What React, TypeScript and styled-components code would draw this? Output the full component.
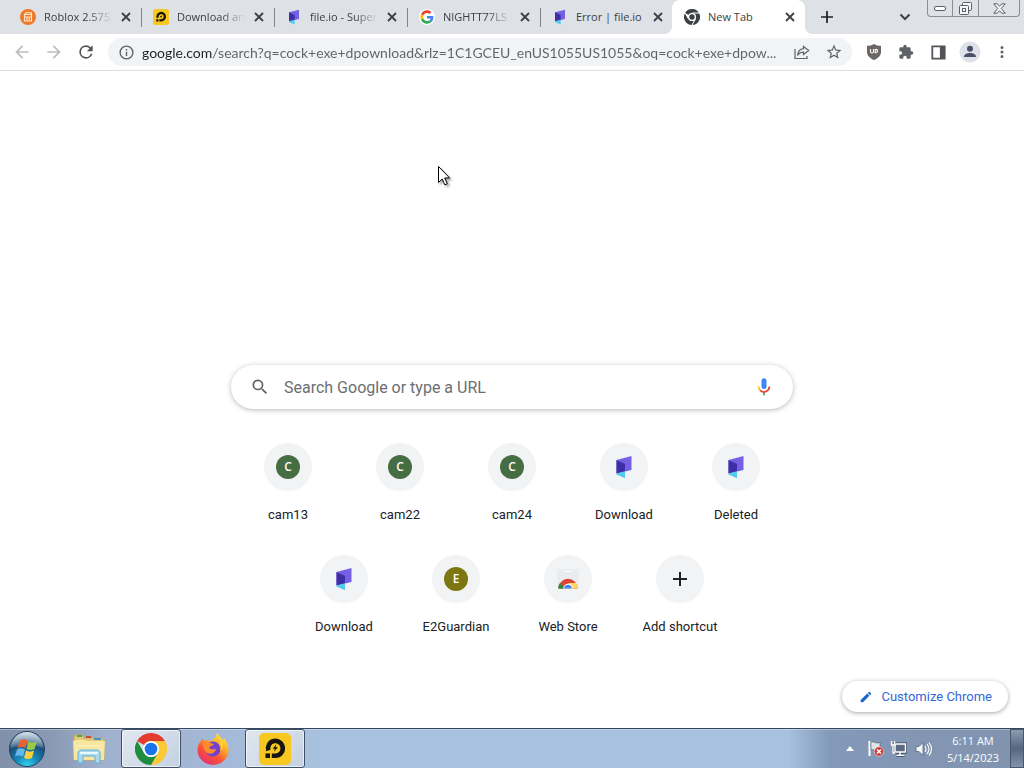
import React from "react";
import styled, { createGlobalStyle, css } from "styled-components";

const GlobalStyle = createGlobalStyle`
  *, *::before, *::after { box-sizing: border-box; }
  body { margin: 0; background: #fff; }
  button, input { font: inherit; color: inherit; border: 0; padding: 0; margin: 0; background: none; outline: none; }
  a { color: inherit; text-decoration: none; }
  svg { display: block; flex: none; }
`;

const ui = `"Open Sans", "Noto Sans", sans-serif`;
const web = `Roboto, sans-serif`;

const Screen = styled.div`
  display: flex;
  flex-direction: column;
  min-height: 100vh;
  font-family: ${ui};
  color: #3c4043;
`;

/* Tab strip */
const TabStrip = styled.header`
  display: flex;
  height: 34px;
  padding-left: 8px;
  background: #dee1e6;
`;

const TabList = styled.nav`
  display: flex;
  min-width: 0;
`;

const TabItem = styled.div<{ $active?: boolean; $divider?: boolean }>`
  position: relative;
  display: flex;
  align-items: center;
  gap: 8px;
  width: 133px;
  padding: 0 9px 0 12px;
  font-size: 11px;
  line-height: 16px;
  ${(p) =>
    p.$divider &&
    css`
      &::before {
        content: "";
        position: absolute;
        left: 0;
        top: 8px;
        width: 1px;
        height: 19px;
        background: #808488;
      }
    `}
  ${(p) =>
    p.$active &&
    css`
      margin-left: -1px;
      background: #fff;
      border-radius: 8px 8px 0 0;
      &::before, &::after {
        content: "";
        position: absolute;
        bottom: 0;
        width: 8px;
        height: 8px;
      }
      &::before {
        left: -8px;
        background: radial-gradient(circle at 0 0, transparent 8px, #fff 8px);
      }
      &::after {
        right: -8px;
        background: radial-gradient(circle at 100% 0, transparent 8px, #fff 8px);
      }
    `}
`;

const TabTitle = styled.a<{ $fade?: boolean }>`
  flex: 1;
  min-width: 0;
  overflow: hidden;
  white-space: nowrap;
  mask-image: ${(p) => (p.$fade ? "linear-gradient(to right, #000 65%, transparent 100%)" : "none")};
`;

const IconButton = styled.button<{ $size: number }>`
  display: flex;
  flex: none;
  align-items: center;
  justify-content: center;
  width: ${(p) => p.$size}px;
  height: ${(p) => p.$size}px;
`;

const StripTools = styled.div`
  display: flex;
  flex: 1;
  align-items: center;
  justify-content: space-between;
  padding: 0 12px 0 8px;
`;

const WindowButtons = styled.div`
  display: flex;
  height: 17px;
  margin-right: 4px;
  border: 1px solid #8b8e94;
  border-top: 0;
  border-radius: 0 0 4px 4px;
`;

const WindowButton = styled.button<{ $width: number }>`
  display: flex;
  align-items: center;
  justify-content: center;
  width: ${(p) => p.$width}px;
  & + & { border-left: 1px solid #8b8e94; }
`;

/* Toolbar */
const Toolbar = styled.div`
  display: flex;
  align-items: center;
  height: 37px;
  padding: 0 6px;
  border-bottom: 1px solid #dcdde0;
  background: #fff;
`;

const AddressBar = styled.form`
  display: flex;
  flex: 1;
  align-items: center;
  min-width: 0;
  height: 28px;
  margin: 0 6px;
  padding: 0 2px;
  border-radius: 14px;
  background: #f1f3f4;
`;

const AddressInput = styled.input`
  flex: 1;
  min-width: 0;
  height: 24px;
  font-family: Lato, ${ui};
  font-size: 14px;
  color: #5f6368;
  background: linear-gradient(to right, #202124 71px, #5f6368 71px);
  background-clip: text;
  -webkit-background-clip: text;
  -webkit-text-fill-color: transparent;
`;

/* New tab page */
const Page = styled.main`
  display: flex;
  flex: 1;
  flex-direction: column;
  align-items: center;
  padding: 294px 16px 16px;
  font-family: ${web};
  background: #fff;
`;

const SearchBox = styled.form`
  display: flex;
  align-items: center;
  gap: 14px;
  width: 100%;
  max-width: 562px;
  height: 44px;
  padding: 0 19px;
  border-radius: 22px;
  box-shadow: 0 1px 5px rgba(32, 33, 36, 0.32);
`;

const SearchInput = styled.input`
  flex: 1;
  min-width: 0;
  height: 24px;
  font-size: 16px;
  &::placeholder { color: #6b6f73; opacity: 1; }
`;

const Shortcuts = styled.nav`
  display: flex;
  flex-wrap: wrap;
  justify-content: center;
  width: 100%;
  max-width: 560px;
  margin-top: 18px;
`;

const tileStyle = css`
  display: flex;
  flex-direction: column;
  align-items: center;
  gap: 16px;
  width: 112px;
  height: 112px;
  padding-top: 16px;
  font-size: 13px;
  line-height: 16px;
  color: #202124;
`;

const Tile = styled.a`${tileStyle}`;
const AddTile = styled.button`${tileStyle}`;

const TileIcon = styled.span`
  display: flex;
  align-items: center;
  justify-content: center;
  width: 48px;
  height: 48px;
  border-radius: 50%;
  background: #f1f3f4;
`;

const Monogram = styled.span<{ $color: string }>`
  width: 24px;
  height: 24px;
  border-radius: 50%;
  background: ${(p) => p.$color};
  color: #fff;
  font: 600 12px/24px "Open Sans", sans-serif;
  text-align: center;
`;

const CustomizeButton = styled.button`
  display: flex;
  align-items: center;
  align-self: flex-end;
  gap: 8px;
  height: 31px;
  margin-top: auto;
  padding: 0 16px 0 17px;
  border-radius: 16px;
  font-size: 13px;
  color: #3367d6;
  background: #fff;
  box-shadow: 0 1px 4px rgba(32, 33, 36, 0.4);
`;

/* Taskbar */
const Taskbar = styled.footer`
  display: flex;
  height: 40px;
  border-top: 1px solid #34495f;
  color: #fff;
  background: linear-gradient(to right, #8090a8 0, #8b9bb6 55px, #9fb1cd 105px, #a3b8d6 210px, #a7c1de 320px, #a7c1de 77%, #8399b8 81%, #8193ae 100%);
  box-shadow: inset 0 1px 0 rgba(255, 255, 255, 0.35);
`;

const TaskButtons = styled.div`
  display: flex;
  flex: 1;
`;

const TaskButton = styled.button<{ $open?: boolean }>`
  display: flex;
  align-items: center;
  justify-content: center;
  width: 60px;
  height: 39px;
  margin: 0 1px;
  border-radius: 3px;
  ${(p) =>
    p.$open &&
    css`
      border: 1px solid #3f4f66;
      background: linear-gradient(135deg, #e0e7f0, #c5d1e1);
      box-shadow: inset 0 0 0 1px rgba(255, 255, 255, 0.6);
    `}
`;

const StartButton = styled.button`
  display: flex;
  align-items: center;
  width: 58px;
  padding-left: 8px;
`;

const Tray = styled.div`
  display: flex;
  align-items: center;
  gap: 6px;
`;

const Clock = styled.time`
  width: 62px;
  margin-left: 4px;
  font-size: 11px;
  line-height: 17px;
  text-align: center;
  white-space: nowrap;
`;

const ShowDesktop = styled.button`
  width: 14px;
  height: 39px;
  border: 1px solid #46566d;
  background: linear-gradient(to bottom, #8d9bb0, #56667d 50%, #8393aa);
`;

const Pointer = styled.svg`
  position: absolute;
  left: 437px;
  top: 165px;
  filter: drop-shadow(2px 2px 1px rgba(0, 0, 0, 0.35));
`;

/* Drawings */
const RobloxGuideIcon = () => (
  <svg width="16" height="16" viewBox="0 0 16 16">
    <circle cx="8" cy="8" r="8" fill="#ee7a28" />
    <path d="M4.500 5.500h7v6.500h-7zM4.500 5.500 6 3.800h5.500v1.700M4.500 8h7M7 8v3.500M9.300 8v3.500" fill="none" stroke="#ffe7d2" strokeWidth="1.100" />
  </svg>
);

const LdIcon = ({ size }: { size: number }) => (
  <svg width={size} height={size} viewBox="0 0 32 32">
    <rect width="32" height="32" rx="5" fill="#f8c820" />
    <path d="M9.300 17.500A7.400 7.400 0 1 1 16.500 22.700h-3.700" fill="none" stroke="#17150c" strokeWidth="4.600" />
    <path d="M6.500 20.400h4.500V25H6.500z" fill="#17150c" />
    <path d="m17.300 11.300-3.600 4.500h2.200l-.8 2.900 3.800-4.400h-2.300z" fill="#17150c" />
  </svg>
);

const FileIoIcon = ({ size }: { size: number }) => (
  <svg width={size} height={size} viewBox="0 0 24 24">
    <path d="M4.500 5 19.500 1v14L4.500 18.500z" fill="#7560e4" />
    <path d="m4.500 5 8.500 4v7.500l-8.500 2z" fill="#3f2fa6" />
    <path d="m4.500 18.500 8.500-2.300v7L4.500 19.500z" fill="#55c9ea" />
  </svg>
);

const GoogleIcon = () => (
  <svg width="16" height="16" viewBox="0 0 48 48">
    <circle cx="24" cy="24" r="24" fill="#fff" />
    <g transform="translate(4 4) scale(.833)">
      <path fill="#EA4335" d="M24 9.500c3.540 0 6.710 1.220 9.210 3.600l6.850-6.850C35.900 2.380 30.470 0 24 0 14.620 0 6.510 5.380 2.560 13.220l7.980 6.190C12.430 13.720 17.740 9.500 24 9.500z" />
      <path fill="#4285F4" d="M46.980 24.550c0-1.570-.15-3.090-.38-4.550H24v9.020h12.940c-.58 2.960-2.260 5.480-4.780 7.180l7.730 6c4.510-4.180 7.090-10.360 7.090-17.650z" />
      <path fill="#FBBC05" d="M10.530 28.590c-.48-1.450-.76-2.990-.76-4.590s.27-3.140.76-4.590l-7.980-6.190C.92 16.460 0 20.120 0 24s.92 7.540 2.560 10.780l7.970-6.190z" />
      <path fill="#34A853" d="M24 48c6.480 0 11.930-2.130 15.890-5.810l-7.730-6c-2.150 1.450-4.920 2.300-8.160 2.300-6.260 0-11.570-4.220-13.470-9.910l-7.980 6.190C6.510 42.620 14.620 48 24 48z" />
    </g>
  </svg>
);

const ChromeIcon = ({ size, mono }: { size: number; mono?: boolean }) => (
  <svg width={size} height={size} viewBox="0 0 48 48">
    <path d="M24 24 3.200 12A24 24 0 0 1 44.800 12z" fill={mono ? "#3c4043" : "#e33b2e"} />
    <path d="M24 12h20.800A24 24 0 0 1 24 48l10.400-18z" fill={mono ? "#3c4043" : "#fcc934"} />
    <path d="M3.200 12 13.600 30a12 12 0 0 0 20.800 0L24 48A24 24 0 0 1 3.200 12z" fill={mono ? "#3c4043" : "#1e8e3e"} />
    {mono && <path d="M24 12h21M13.600 30 3.200 12M34.400 30 24 48" stroke="#fff" strokeWidth="3" />}
    <circle cx="24" cy="24" r="12" fill="#fff" />
    <circle cx="24" cy="24" r={mono ? 8 : 9.5} fill={mono ? "#3c4043" : "#1a73e8"} />
  </svg>
);

const CrossIcon = () => (
  <svg width="10" height="10" viewBox="0 0 10 10"><path d="m1 1 8 8M9 1 1 9" stroke="#3c4043" strokeWidth="1.800" /></svg>
);

const PlusIcon = ({ size }: { size: number }) => (
  <svg width={size} height={size} viewBox="0 0 14 14"><path d="M7 0v14M0 7h14" stroke="#202124" strokeWidth="2" /></svg>
);

const WebStoreIcon = () => (
  <svg width="24" height="24" viewBox="0 0 24 24">
    <path d="M1 2h22v4l-1 16H2L1 6z" fill="#e9ebee" />
    <path d="M8 4h8v1H8z" fill="#fff" />
    <path d="M2.300 21.500a9.700 9.700 0 0 1 19.400 0z" fill="#db4437" />
    <path d="M2.300 21.500a9.700 9.700 0 0 1 1.700-5.400l4.500 5.400z" fill="#1e8e3e" />
    <path d="M12 16h8.100a9.700 9.700 0 0 1 1.600 5.500H14z" fill="#fdd663" />
    <path d="M7.300 21.500a4.700 4.700 0 0 1 9.400 0z" fill="#fff" />
    <path d="M8.300 21.500a3.700 3.700 0 0 1 7.400 0z" fill="#4285f4" />
  </svg>
);

const MicIcon = () => (
  <svg width="20" height="20" viewBox="0 0 24 24">
    <rect x="9" y="1.500" width="6" height="13" rx="3" fill="#4285f4" />
    <path d="M11 17.500h2V22h-2z" fill="#34a853" />
    <path d="M5.500 11.500a6.500 6.500 0 0 0 2 4.600" fill="none" stroke="#fbbc04" strokeWidth="2" />
    <path d="M7.400 16a6.500 6.500 0 0 0 11.100-4.500" fill="none" stroke="#ea4335" strokeWidth="2" />
  </svg>
);

const glyphs = {
  back: "M20 11H7.830l5.590-5.590L12 4l-8 8 8 8 1.410-1.410L7.830 13H20v-2z",
  forward: "m12 4-1.410 1.410L16.170 11H4v2h12.170l-5.580 5.590L12 20l8-8z",
  reload: "M17.650 6.350A7.960 7.960 0 0 0 12 4a8 8 0 1 0 7.730 10h-2.080A6 6 0 1 1 12 6c1.660 0 3.140.69 4.220 1.780L13 11h7V4z",
  info: "M11 7h2v2h-2zm0 4h2v6h-2zm1-9a10 10 0 1 0 0 20 10 10 0 0 0 0-20zm0 18a8 8 0 1 1 0-16 8 8 0 0 1 0 16z",
  star: "m22 9.240-7.190-.62L12 2 9.190 8.630 2 9.240l5.460 4.730L5.820 21 12 17.270 18.180 21l-1.630-7.030zM12 15.400l-3.760 2.270 1-4.280-3.320-2.880 4.380-.38L12 6.100l1.710 4.040 4.380.38-3.320 2.880 1 4.280z",
  puzzle: "M20.500 11H19V7a2 2 0 0 0-2-2h-4V3.500a2.500 2.500 0 0 0-5 0V5H4a2 2 0 0 0-2 2v3.800h1.500a2.700 2.700 0 0 1 0 5.400H2V20c0 1.100.9 2 2 2h3.800v-1.500a2.700 2.700 0 0 1 5.400 0V22H17a2 2 0 0 0 2-2v-4h1.500a2.500 2.500 0 0 0 0-5z",
  more: "M12 8a2 2 0 1 0 0-4 2 2 0 0 0 0 4zm0 2a2 2 0 1 0 0 4 2 2 0 0 0 0-4zm0 6a2 2 0 1 0 0 4 2 2 0 0 0 0-4z",
  panel: "M2 2h20v20H2zm2.500 2.500v15h9.500v-15z",
  search: "M15.500 14h-.79l-.28-.27A6.500 6.500 0 1 0 13.730 14.430l.27.28v.79l5 4.990L20.490 19zm-6 0a4.500 4.500 0 1 1 0-9 4.500 4.500 0 0 1 0 9z",
  pencil: "M3 17.250V21h3.750L17.810 9.940l-3.750-3.750zM20.710 7.040a1 1 0 0 0 0-1.410l-2.340-2.340a1 1 0 0 0-1.410 0l-1.830 1.830 3.750 3.750z",
};

const Glyph = ({ name, size, color = "#5f6368" }: { name: keyof typeof glyphs; size: number; color?: string }) => (
  <svg width={size} height={size} viewBox="0 0 24 24"><path d={glyphs[name]} fill={color} fillRule="evenodd" /></svg>
);

const ShareIcon = () => (
  <svg width="16" height="16" viewBox="0 0 16 16" fill="none" stroke="#5f6368" strokeWidth="1.200">
    <path d="M1 5v9.500h12V12M9.500 2.500 14.700 6.500l-5.200 4V8.200C6.500 8.200 4.800 9.500 3.500 11.500 4 7.500 6 5 9.500 4.700z" />
  </svg>
);

const ShieldIcon = () => (
  <svg width="16" height="16" viewBox="0 0 16 16">
    <path d="M8 0c2 1.400 4.500 1.800 7 1.800V8c0 4-3.500 6.500-7 8-3.500-1.500-7-4-7-8V1.800C3.500 1.800 6 1.400 8 0z" fill="#6c6764" />
    <path d="M4.500 5v2.500a1.500 1.500 0 0 0 3 0V5M9.200 5.600v3h.8a1.600 1.600 0 0 0 0-3.200z" fill="none" stroke="#fff" strokeWidth="1.100" />
  </svg>
);

const AvatarIcon = () => (
  <svg width="22" height="22" viewBox="0 0 22 22">
    <circle cx="11" cy="11" r="10.500" fill="#dfe1ea" />
    <circle cx="11" cy="7.800" r="3" fill="#4b5066" />
    <path d="M5 16c0-3 3-4 6-4s6 1 6 4z" fill="#4b5066" />
  </svg>
);

const StartOrb = () => (
  <svg width="38" height="38" viewBox="0 0 38 38">
    <defs>
      <radialGradient id="orb" cx=".5" cy="1" r=".95">
        <stop offset="0" stopColor="#35d9f5" /><stop offset=".35" stopColor="#1689b9" />
        <stop offset=".7" stopColor="#1b4f7b" /><stop offset="1" stopColor="#7f9cb5" />
      </radialGradient>
      <linearGradient id="orbShine" x2="0" y2="1">
        <stop offset="0" stopColor="#fff" stopOpacity=".65" /><stop offset="1" stopColor="#fff" stopOpacity=".12" />
      </linearGradient>
    </defs>
    <circle cx="19" cy="19" r="17.500" fill="url(#orb)" stroke="#24435e" />
    <path d="M3 18a16 16 0 0 1 32 0c-10-4-22-3-32 0z" fill="url(#orbShine)" />
    <path d="M12 10.500c3-2 5-1.500 7.500 0l-2 7.500c-3-1.500-5-1.500-8 0z" fill="#ea6232" />
    <path d="M20.500 11.500c3 1.500 5 1.500 8.500 0l-2.500 7.500c-3 1.500-5 1-8 0z" fill="#9bc943" />
    <path d="M9 19.500c3-2 5-1.500 8 0l-2 7c-3-1.500-5-1.500-8 0z" fill="#65b7ec" />
    <path d="M18 20.500c3 1.500 5 1.500 8 0l-2 7.500c-3 1.500-5 1-8 0z" fill="#fbcf42" />
  </svg>
);

const ExplorerIcon = () => (
  <svg width="34" height="32" viewBox="0 0 34 32">
    <path d="M2 4 3 2h8l1 3h18l2 2v20H2z" fill="#e4c878" stroke="#c9a95c" />
    <path d="M5 2h5v2H5z" fill="#49a942" /><path d="M14 3h5v2h-5z" fill="#bd5537" /><path d="M22 5h7v2h-7z" fill="#4792ce" />
    <path d="M1 8c5-2 10-1 15 0h17l-1 19H2z" fill="#f7e6a0" />
    <path d="M3 13h28M3 17h28" stroke="#fff4c4" />
    <path d="M6 30V20c0-2 1-3 3-3h16c2 0 3 1 3 3v10h-5v-7H11v7z" fill="#a9d9ef" stroke="#62aed4" />
    <path d="M8 20h18" stroke="#e9faff" strokeWidth="2" />
  </svg>
);

const FirefoxIcon = () => (
  <svg width="32" height="32" viewBox="0 0 32 32">
    <defs>
      <linearGradient id="fox" x1=".85" y1="0" x2=".2" y2="1">
        <stop offset="0" stopColor="#fff04a" /><stop offset=".35" stopColor="#ffac28" />
        <stop offset=".65" stopColor="#fb5134" /><stop offset="1" stopColor="#e12c83" />
      </linearGradient>
    </defs>
    <path d="M19 4c0-2 .5-3 1.500-4 1 3 4 4.500 5.500 7l1-2c3 4 4.500 8 4.500 12A15.500 15 0 0 1 .5 17c0-4 1.500-7 3.500-9V5l4 3c3-1 4.500-.5 6 0z" fill="url(#fox)" />
    <circle cx="16" cy="16" r="7.500" fill="#7341ca" />
    <path d="M8 8c2-1 4 0 5 2l4 1c-1 2-4 1.500-5 4 2 2 5 1 7 1-1 5-7 6-10 3-4-4-3-8-1-11z" fill="#ff8b2b" />
    <path d="M19 4c5 4 6 9 4 14 4-3 3-8 1-11z" fill="#ffd43b" />
  </svg>
);

const FlagIcon = () => (
  <svg width="17" height="17" viewBox="0 0 17 17">
    <path d="M2.500 1v15" stroke="#fff" strokeWidth="2" />
    <path d="M4 2c3-1 4 2 9 .5V10c-4 1.500-6-1-9 0z" fill="#dfe4eb" stroke="#4a5668" strokeWidth=".6" />
    <circle cx="12" cy="11.500" r="4.700" fill="#d13a32" stroke="#fff" strokeWidth=".5" />
    <path d="m10 9.500 4 4m0-4-4 4" stroke="#fff" strokeWidth="1.600" />
  </svg>
);

const NetworkIcon = () => (
  <svg width="18" height="17" viewBox="0 0 18 17" fill="none">
    <path d="M5 4h10.500v8H5zM10 12v3M6.500 15.300h8" stroke="#35445a" strokeWidth="3" />
    <path d="M5 4h10.500v8H5z" fill="#5a6a82" />
    <path d="M5 4h10.500v8H5zM10 12v3M6.500 15.300h8" stroke="#fff" strokeWidth="1.500" />
    <path d="M1.500 1v4h3V1M3 5v8h2" stroke="#fff" strokeWidth="1.300" />
  </svg>
);

const SpeakerIcon = () => (
  <svg width="17" height="16" viewBox="0 0 17 16" fill="none">
    <path d="M1 5.500h3L8 1.500v13l-4-4H1z" fill="#f4f6f8" stroke="#4a586c" strokeWidth=".7" />
    <path d="M10 5c1.300 2 1.300 4 0 6M12 3c2.300 3 2.300 7 0 10M14 1.500c3 4 3 9 0 13" stroke="#fff" strokeWidth="1.100" />
  </svg>
);

type TabInfo = { title: string; icon: React.ReactNode; divider?: boolean; fade?: boolean };

const tabs: TabInfo[] = [
  { title: "Roblox 2.575", icon: <RobloxGuideIcon />, fade: true },
  { title: "Download an", icon: <LdIcon size={16} />, divider: true, fade: true },
  { title: "file.io - Super", icon: <FileIoIcon size={16} />, divider: true, fade: true },
  { title: "NIGHTT77LS", icon: <GoogleIcon />, divider: true, fade: true },
  { title: "Error | file.io", icon: <FileIoIcon size={16} />, divider: true },
  { title: "New Tab", icon: <ChromeIcon size={16} mono /> },
];

const shortcuts = [
  { label: "cam13", icon: <Monogram $color="#476d43">C</Monogram> },
  { label: "cam22", icon: <Monogram $color="#476d43">C</Monogram> },
  { label: "cam24", icon: <Monogram $color="#476d43">C</Monogram> },
  { label: "Download", icon: <FileIoIcon size={24} /> },
  { label: "Deleted", icon: <FileIoIcon size={24} /> },
  { label: "Download", icon: <FileIoIcon size={24} /> },
  { label: "E2Guardian", icon: <Monogram $color="#7c7710">E</Monogram> },
  { label: "Web Store", icon: <WebStoreIcon /> },
];

const address =
  "google.com/search?q=cock+exe+dpownload&rlz=1C1GCEU_enUS1055US1055&oq=cock+exe+dpow...";

export default function App() {
  return (
    <Screen>
      <GlobalStyle />
      <TabStrip>
        <TabList aria-label="Open tabs">
          {tabs.map((tab, i) => (
            <TabItem key={i} $active={i === tabs.length - 1} $divider={tab.divider}>
              {tab.icon}
              <TabTitle href="#" $fade={tab.fade}>{tab.title}</TabTitle>
              <IconButton $size={12} aria-label="Close tab"><CrossIcon /></IconButton>
            </TabItem>
          ))}
        </TabList>
        <StripTools>
          <IconButton $size={28} aria-label="New tab"><PlusIcon size={12} /></IconButton>
          <IconButton $size={20} aria-label="Search tabs">
            <svg width="12" height="8" viewBox="0 0 12 8"><path d="m1.500 1.500 4.500 4.500 4.500-4.500" fill="none" stroke="#3c4043" strokeWidth="2" /></svg>
          </IconButton>
        </StripTools>
        <WindowButtons>
          <WindowButton $width={24} aria-label="Minimize">
            <svg width="12" height="5" viewBox="0 0 12 5"><rect x=".5" y=".5" width="11" height="4" rx="1.500" fill="#fff" stroke="#5b5f66" /></svg>
          </WindowButton>
          <WindowButton $width={26} aria-label="Restore">
            <svg width="13" height="13" viewBox="0 0 13 13" fill="#f4f5f7" stroke="#5b5f66">
              <rect x="3.500" y=".5" width="9" height="8" rx="1" /><rect x=".5" y="3.500" width="9" height="9" rx="1" /><rect x="3.500" y="6.500" width="3" height="3" />
            </svg>
          </WindowButton>
          <WindowButton $width={41} aria-label="Close">
            <svg width="13" height="11" viewBox="0 0 13 11"><path d="M.8.8h3.400l2.300 2.500L8.800.8h3.400L8.300 5.500l3.900 4.700H8.800L6.500 7.700l-2.300 2.500H.8l3.900-4.700z" fill="#f4f5f7" stroke="#5b5f66" /></svg>
          </WindowButton>
        </WindowButtons>
      </TabStrip>

      <Toolbar>
        <IconButton $size={32} aria-label="Back"><Glyph name="back" size={20} color="#bbbdc0" /></IconButton>
        <IconButton $size={32} aria-label="Forward"><Glyph name="forward" size={20} color="#bbbdc0" /></IconButton>
        <IconButton $size={32} aria-label="Reload"><Glyph name="reload" size={20} color="#505458" /></IconButton>
        <AddressBar>
          <IconButton $size={32} type="button" aria-label="Site information"><Glyph name="info" size={17} /></IconButton>
          <AddressInput aria-label="Address" defaultValue={address} />
          <IconButton $size={32} type="button" aria-label="Share"><ShareIcon /></IconButton>
          <IconButton $size={32} type="button" aria-label="Bookmark"><Glyph name="star" size={18} /></IconButton>
        </AddressBar>
        <IconButton $size={32} aria-label="Content blocker"><ShieldIcon /></IconButton>
        <IconButton $size={32} aria-label="Extensions"><Glyph name="puzzle" size={16} /></IconButton>
        <IconButton $size={32} aria-label="Side panel"><Glyph name="panel" size={17} color="#505458" /></IconButton>
        <IconButton $size={32} aria-label="Profile"><AvatarIcon /></IconButton>
        <IconButton $size={32} aria-label="Menu"><Glyph name="more" size={18} /></IconButton>
      </Toolbar>

      <Page>
        <SearchBox>
          <Glyph name="search" size={20} />
          <SearchInput aria-label="Search" placeholder="Search Google or type a URL" />
          <IconButton $size={20} type="button" aria-label="Search by voice"><MicIcon /></IconButton>
        </SearchBox>
        <Shortcuts aria-label="Shortcuts">
          {shortcuts.map((s, i) => (
            <Tile key={i} href="#"><TileIcon>{s.icon}</TileIcon>{s.label}</Tile>
          ))}
          <AddTile><TileIcon><PlusIcon size={14} /></TileIcon>Add shortcut</AddTile>
        </Shortcuts>
        <CustomizeButton><Glyph name="pencil" size={14} color="#1a66d0" />Customize Chrome</CustomizeButton>
      </Page>

      <Taskbar>
        <TaskButtons>
          <StartButton aria-label="Start"><StartOrb /></StartButton>
          <TaskButton aria-label="File Explorer"><ExplorerIcon /></TaskButton>
          <TaskButton aria-label="Chrome" $open><ChromeIcon size={32} /></TaskButton>
          <TaskButton aria-label="Firefox"><FirefoxIcon /></TaskButton>
          <TaskButton aria-label="LDPlayer" $open><LdIcon size={32} /></TaskButton>
        </TaskButtons>
        <Tray>
          <IconButton $size={20} aria-label="Show hidden icons">
            <svg width="8" height="5" viewBox="0 0 8 5"><path d="M4 0 8 5H0z" fill="#fff" /></svg>
          </IconButton>
          <IconButton $size={18} aria-label="Action center"><FlagIcon /></IconButton>
          <IconButton $size={18} aria-label="Network"><NetworkIcon /></IconButton>
          <IconButton $size={18} aria-label="Volume"><SpeakerIcon /></IconButton>
          <Clock>6:11 AM<br />5/14/2023</Clock>
          <ShowDesktop aria-label="Show desktop" />
        </Tray>
      </Taskbar>

      <Pointer width="14" height="22" viewBox="0 0 14 22">
        <path d="M1.500 1.500v16l3.700-3.500 2.600 5.800 2.500-1.100-2.600-5.700h5z" fill="#fff" stroke="#000" />
      </Pointer>
    </Screen>
  );
}
